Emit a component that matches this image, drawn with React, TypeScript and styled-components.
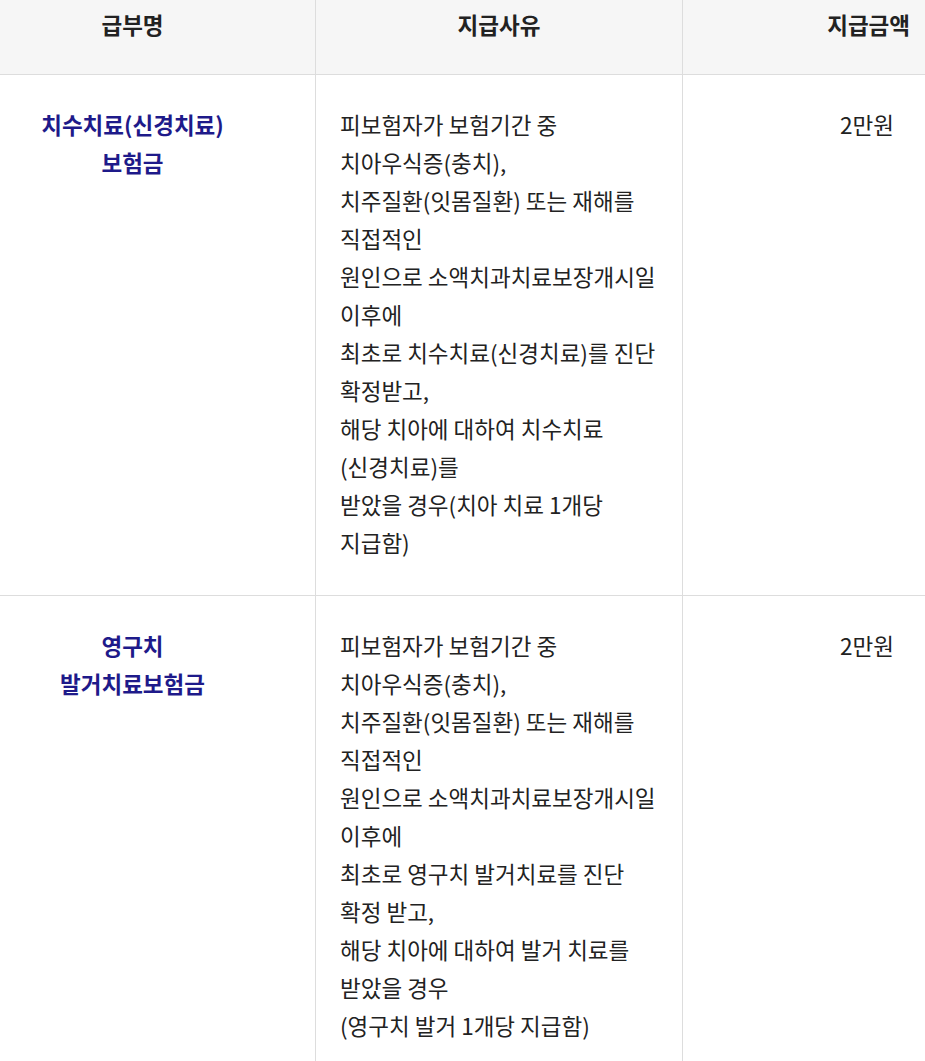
import React from "react";
import styled, { createGlobalStyle } from "styled-components";

const GlobalStyle = createGlobalStyle`
  html, body {
    margin: 0;
    padding: 0;
    background: #ffffff;
    overflow: hidden;
  }
  body {
    font-family: "Noto Sans CJK KR", "Noto Sans", sans-serif;
    color: #222222;
  }
`;

const Table = styled.div`
  display: grid;
  grid-template-columns: 316px 367px 1fr;
  width: 925px;
`;

const HeadCell = styled.div<{ $align: "center" | "right"; $last?: boolean }>`
  background: #f6f6f6;
  height: 75px;
  box-sizing: border-box;
  padding: 5px ${({ $last }) => ($last ? "15px" : "0")} 0 0;
  border-bottom: 1px solid #dddddd;
  border-right: ${({ $last }) => ($last ? "none" : "1px solid #dddddd")};
  font-size: 22.5px;
  font-weight: 700;
  line-height: 38px;
  text-align: ${({ $align }) => $align};
`;

const NameCell = styled.div<{ $last?: boolean }>`
  padding: 30px 50px 34px 0;
  border-right: 1px solid #dddddd;
  border-bottom: ${({ $last }) => ($last ? "none" : "1px solid #dddddd")};
  text-align: center;
  font-size: 22.5px;
  font-weight: 700;
  line-height: 38px;
  color: #1e1a8a;
`;

const ReasonCell = styled.div<{ $last?: boolean }>`
  padding: 30px 20px 34px 24px;
  border-right: 1px solid #dddddd;
  border-bottom: ${({ $last }) => ($last ? "none" : "1px solid #dddddd")};
  font-size: 22.5px;
  line-height: 38px;
`;

const Line = styled.div`
  white-space: nowrap;
`;

const AmountCell = styled.div<{ $last?: boolean }>`
  padding: 30px 31px 34px 0;
  border-bottom: ${({ $last }) => ($last ? "none" : "1px solid #dddddd")};
  text-align: right;
  font-size: 22.5px;
  line-height: 38px;
`;

type Row = { name: string[]; reason: string[]; amount: string };

const rows: Row[] = [
  {
    name: ["치수치료(신경치료)", "보험금"],
    reason: [
      "피보험자가 보험기간 중",
      "치아우식증(충치),",
      "치주질환(잇몸질환) 또는 재해를",
      "직접적인",
      "원인으로 소액치과치료보장개시일",
      "이후에",
      "최초로 치수치료(신경치료)를 진단",
      "확정받고,",
      "해당 치아에 대하여 치수치료",
      "(신경치료)를",
      "받았을 경우(치아 치료 1개당",
      "지급함)",
    ],
    amount: "2만원",
  },
  {
    name: ["영구치", "발거치료보험금"],
    reason: [
      "피보험자가 보험기간 중",
      "치아우식증(충치),",
      "치주질환(잇몸질환) 또는 재해를",
      "직접적인",
      "원인으로 소액치과치료보장개시일",
      "이후에",
      "최초로 영구치 발거치료를 진단",
      "확정 받고,",
      "해당 치아에 대하여 발거 치료를",
      "받았을 경우",
      "(영구치 발거 1개당 지급함)",
    ],
    amount: "2만원",
  },
];

export default function App() {
  return (
    <>
      <GlobalStyle />
      <Table>
        <HeadCell $align="center" style={{ paddingRight: 50 }}>
          급부명
        </HeadCell>
        <HeadCell $align="center">지급사유</HeadCell>
        <HeadCell $align="right" $last>
          지급금액
        </HeadCell>
        {rows.map((row, i) => {
          const last = i === rows.length - 1;
          return (
            <React.Fragment key={i}>
              <NameCell $last={last}>
                {row.name.map((n) => (
                  <Line key={n}>{n}</Line>
                ))}
              </NameCell>
              <ReasonCell $last={last}>
                {row.reason.map((r, j) => (
                  <Line key={j}>{r}</Line>
                ))}
              </ReasonCell>
              <AmountCell $last={last}>{row.amount}</AmountCell>
            </React.Fragment>
          );
        })}
      </Table>
    </>
  );
}
